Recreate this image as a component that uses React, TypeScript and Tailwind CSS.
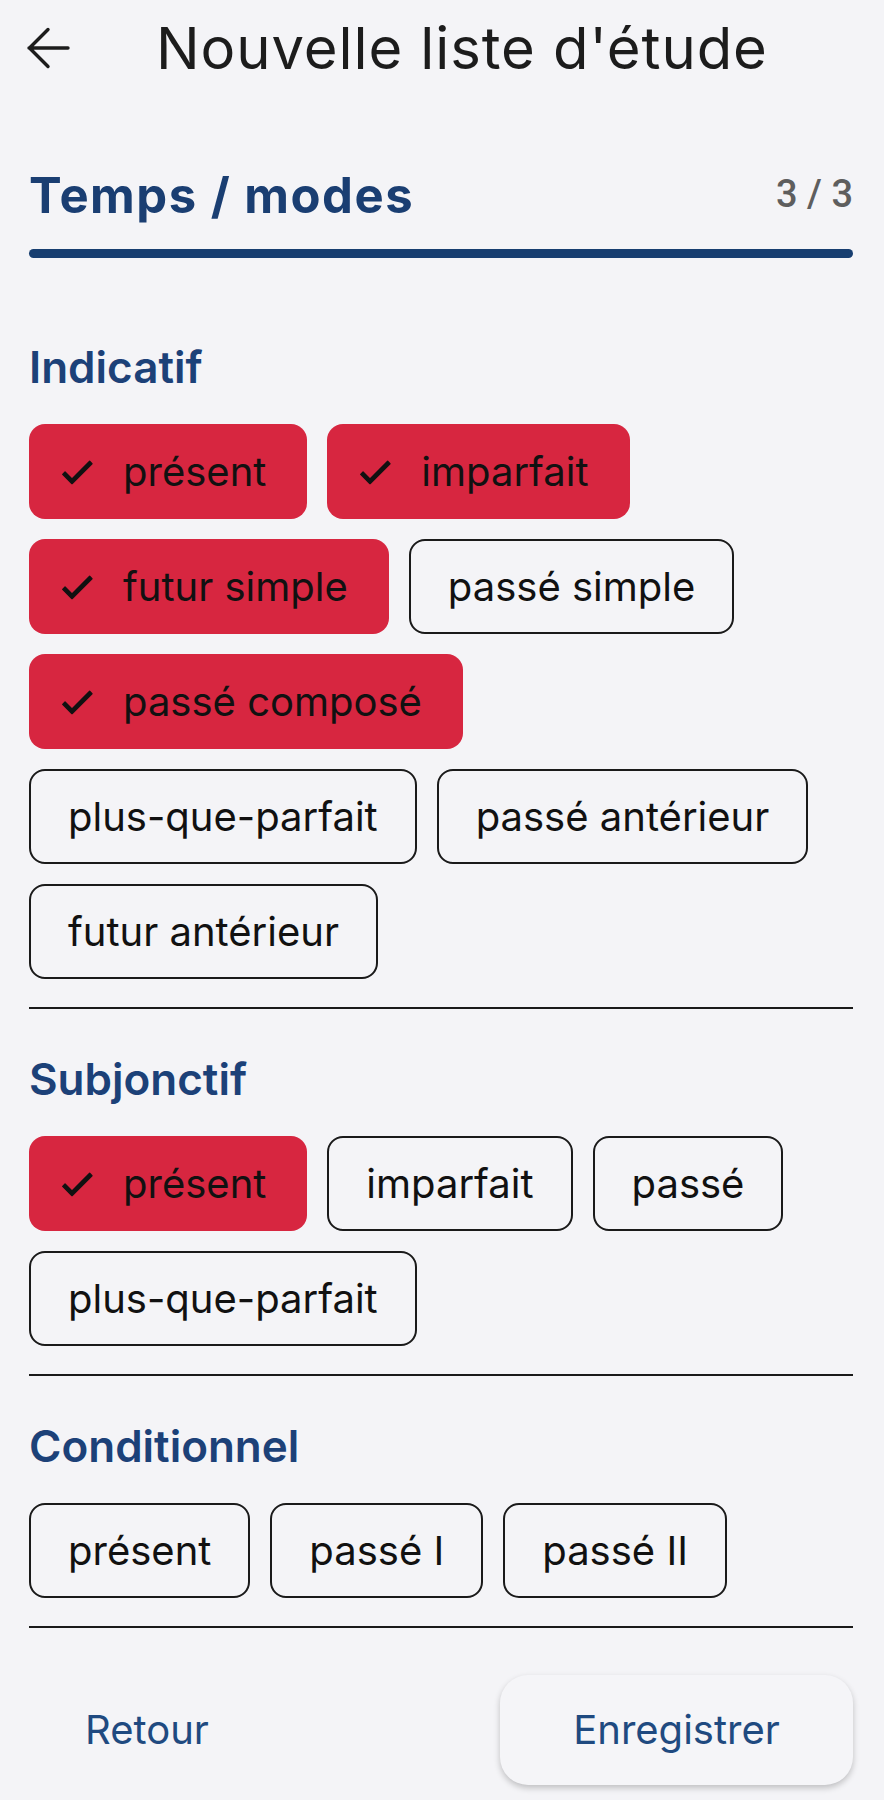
import React from "react";

type ChipData = { label: string; selected?: boolean };

const sections: { title: string; chips: ChipData[] }[] = [
  {
    title: "Indicatif",
    chips: [
      { label: "présent", selected: true },
      { label: "imparfait", selected: true },
      { label: "futur simple", selected: true },
      { label: "passé simple" },
      { label: "passé composé", selected: true },
      { label: "plus-que-parfait" },
      { label: "passé antérieur" },
      { label: "futur antérieur" },
    ],
  },
  {
    title: "Subjonctif",
    chips: [
      { label: "présent", selected: true },
      { label: "imparfait" },
      { label: "passé" },
      { label: "plus-que-parfait" },
    ],
  },
  {
    title: "Conditionnel",
    chips: [{ label: "présent" }, { label: "passé I" }, { label: "passé II" }],
  },
];

function Chip({ label, selected }: ChipData) {
  if (selected) {
    return (
      <div className="h-[95px] rounded-[16px] bg-[#d72640] flex items-center pl-[28px] pr-[41px]">
        <svg width="40" height="40" viewBox="0 0 24 24" className="shrink-0">
          <path d="M9 16.17L4.83 12l-1.42 1.41L9 19 21 7l-1.41-1.41z" fill="#111" stroke="#111" strokeWidth="0.8" strokeLinejoin="round" />
        </svg>
        <span className="ml-[26px] text-[40px] leading-none text-[#111] whitespace-nowrap">{label}</span>
      </div>
    );
  }
  return (
    <div className="h-[95px] rounded-[16px] border-2 border-[#1a1a1a] flex items-center px-[37px]">
      <span className="text-[40px] leading-none text-[#111] whitespace-nowrap">{label}</span>
    </div>
  );
}

export default function App() {
  return (
    <div className="w-[884px] min-h-[1800px] bg-[#f4f4f7] font-['Inter',sans-serif]">
      {/* App bar */}
      <div className="h-[96px] flex items-center">
        <svg width="46" height="46" viewBox="0 0 46 46" className="ml-[26px] shrink-0">
          <path
            d="M3 23 L42 23 M22 4.5 L3.5 23 L22 41.5"
            fill="none"
            stroke="#1c1c1c"
            strokeWidth="3.4"
            strokeLinecap="round"
            strokeLinejoin="round"
          />
        </svg>
        <div className="ml-[84px] text-[58px] leading-none tracking-[0.9px] text-[#1c1c1c] whitespace-nowrap">
          Nouvelle liste d'étude
        </div>
      </div>

      <div className="pl-[29px] pr-[31px]">
        {/* Step header */}
        <div className="mt-[75px] flex justify-between items-start">
          <div className="text-[49px] leading-none font-bold tracking-[1.5px] text-[#1a3e72]">Temps / modes</div>
          <div className="mt-[4px] font-['Roboto',sans-serif] text-[38px] leading-none font-medium text-[#5e5e5e]">
            3 / 3
          </div>
        </div>
        <div className="mt-[29px] h-[9px] rounded-full bg-[#173e70]" />

        {sections.map((s, i) => (
          <div key={s.title}>
            <div
              className={
                (i === 0 ? "mt-[87px]" : "mt-[48px]") +
                " text-[44px] leading-none font-semibold text-[#1c4178]"
              }
            >
              {s.title}
            </div>
            <div className="mt-[35px] flex flex-wrap gap-x-[20px] gap-y-[20px]">
              {s.chips.map((c, j) => (
                <Chip key={j} label={c.label} selected={c.selected} />
              ))}
            </div>
            <div className="mt-[28px] h-[2px] bg-[#1a1a1a]" />
          </div>
        ))}

        {/* Footer buttons */}
        <div className="mt-[47px] flex items-center justify-between">
          <div className="w-[236px] text-center text-[40px] leading-none text-[#1f4a80]">Retour</div>
          <div className="w-[353px] h-[110px] rounded-[28px] bg-[#f5f5f8] shadow-[0_3px_6px_rgba(0,0,0,0.22)] flex items-center justify-center text-[40px] leading-none text-[#1f4a80]">
            Enregistrer
          </div>
        </div>
      </div>
    </div>
  );
}
